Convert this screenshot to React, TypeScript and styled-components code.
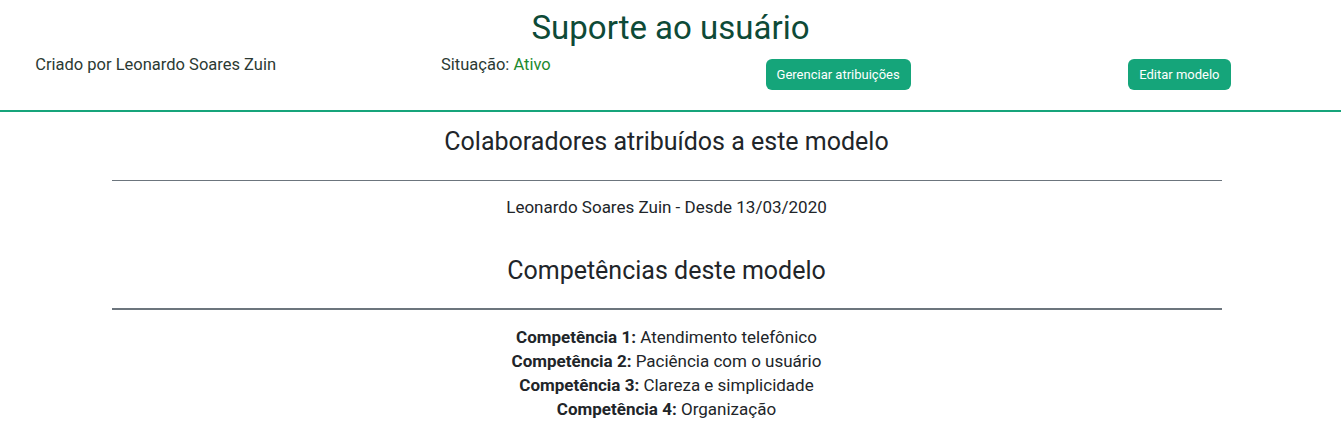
import React from "react";
import styled, { createGlobalStyle } from "styled-components";

const Global = createGlobalStyle`
  body { margin: 0; background: #fff; font-family: Roboto, "Liberation Sans", Arial, sans-serif; color: #212529; }
  * { box-sizing: border-box; }
`;

const Header = styled.header`
  border-bottom: 2px solid #17a47b;
  padding-top: 7px;
  padding-bottom: 20px;
`;

const Title = styled.h1`
  margin: 0;
  text-align: center;
  font-weight: 400;
  font-size: 33px;
  line-height: 42px;
  color: #0e4a37;
`;

const InfoRow = styled.div`
  display: grid;
  grid-template-columns: repeat(4, 1fr);
  align-items: start;
  margin-top: 5px;
`;

const Cell = styled.div<{ $shift?: number }>`
  display: flex;
  justify-content: center;
  transform: translateX(${(p) => p.$shift ?? 0}px);
`;

const InfoText = styled.span`
  font-size: 16.5px;
  line-height: 22px;
  color: #2b3a33;
`;

const Status = styled.span`
  color: #1c8a2e;
`;

const Button = styled.button`
  margin-top: 5px;
  border: none;
  background: #15a57a;
  color: #fff;
  font-family: inherit;
  font-size: 13px;
  padding: 0 11px;
  height: 31px;
  border-radius: 6px;
  cursor: pointer;
`;

const Container = styled.main`
  width: 1110px;
  margin-left: calc(50% - 559px);
  text-align: center;
`;

const SectionTitle = styled.h2`
  margin: 0;
  font-weight: 400;
  font-size: 25px;
  line-height: 30px;
  color: #212529;
`;

const Divider = styled.hr<{ $thick?: boolean }>`
  border: none;
  height: ${(p) => (p.$thick ? 2 : 1)}px;
  background: #6c757d;
  margin: ${(p) => (p.$thick ? "22px 0 15px" : "23px 0 14px")};
`;

const Line = styled.p`
  margin: 0;
  font-size: 17px;
  line-height: 24px;
  color: #212529;
`;

const Section = styled.section<{ $top: number }>`
  padding-top: ${(p) => p.$top}px;
`;

const competencias = [
  "Atendimento telefônico",
  "Paciência com o usuário",
  "Clareza e simplicidade",
  "Organização",
];

export default function App() {
  return (
    <>
      <Global />
      <Header>
        <Title>Suporte ao usuário</Title>
        <InfoRow>
          <Cell $shift={-12}>
            <InfoText>Criado por Leonardo Soares Zuin</InfoText>
          </Cell>
          <Cell $shift={-7}>
            <InfoText>
              Situação: <Status>Ativo</Status>
            </InfoText>
          </Cell>
          <Cell>
            <Button>Gerenciar atribuições</Button>
          </Cell>
          <Cell $shift={6}>
            <Button>Editar modelo</Button>
          </Cell>
        </InfoRow>
      </Header>
      <Container>
        <Section $top={15}>
          <SectionTitle>Colaboradores atribuídos a este modelo</SectionTitle>
          <Divider />
          <Line>Leonardo Soares Zuin - Desde 13/03/2020</Line>
        </Section>
        <Section $top={37}>
          <SectionTitle>Competências deste modelo</SectionTitle>
          <Divider $thick />
          {competencias.map((c, i) => (
            <Line key={i}>
              <b>Competência {i + 1}:</b> {c}
            </Line>
          ))}
        </Section>
      </Container>
    </>
  );
}
